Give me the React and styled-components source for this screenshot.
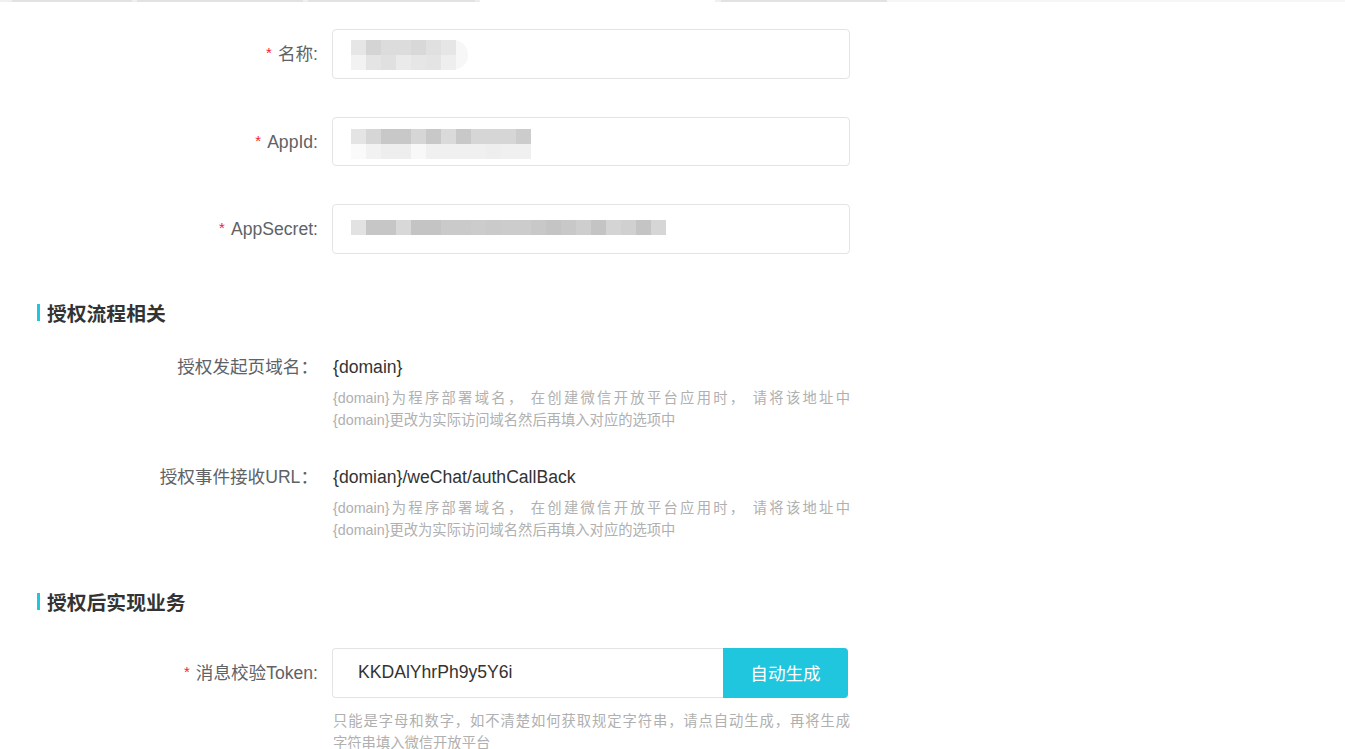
import React from 'react';
import styled, { createGlobalStyle } from 'styled-components';

const GlobalStyle = createGlobalStyle`
  html, body {
    margin: 0;
    padding: 0;
    background: #fff;
  }
  body {
    font-family: "Liberation Sans", "Noto Sans CJK SC", sans-serif;
  }
`;

const Page = styled.div`
  width: 1345px;
  min-height: 749px;
  overflow: hidden;
  background: #fff;
`;

const TabStrip = styled.div`
  display: flex;
  height: 2px;
  background: #f6f6f6;
`;

const TabEdge = styled.div`
  width: ${(p) => p.$w}px;
  height: 2px;
  background: ${(p) => p.$c};
`;

const Form = styled.div`
  padding-top: 27px;
`;

const Item = styled.div`
  display: grid;
  grid-template-columns: 318px ${(p) => p.$w || 518}px;
  column-gap: 14px;
  align-items: ${(p) => (p.$top ? 'start' : 'center')};
  margin-top: ${(p) => p.$mt || 0}px;
  margin-bottom: ${(p) => p.$mb || 0}px;
`;

const Label = styled.div`
  text-align: right;
  font-size: 17.6px;
  line-height: 24px;
  color: #606266;
  white-space: nowrap;
`;

const Star = styled.span`
  color: #f5222d;
  font-size: 15px;
  margin-right: 6px;
  vertical-align: 2px;
`;

const Field = styled.div`
  box-sizing: border-box;
  height: 49.5px;
  border: 1px solid #e4e4e4;
  border-radius: 4px;
  background: #fff;
  display: flex;
  align-items: center;
  padding-left: 18px;
`;

const Mosaic = styled.div`
  display: grid;
  grid-template-columns: repeat(${(p) => p.$cols}, 15px);
  grid-auto-rows: 15px;
  margin-top: ${(p) => p.$dy || 0}px;
  padding-right: ${(p) => (p.$glow ? 12 : 0)}px;
  border-radius: 0 16px 16px 0;
  background: ${(p) => (p.$glow ? '#f7f7f7' : 'transparent')};
`;

const Cell = styled.div`
  background: ${(p) => p.$c};
`;

const SectionTitle = styled.div`
  display: flex;
  align-items: center;
  margin-left: 37px;
  margin-top: ${(p) => p.$mt}px;
  height: 28px;
  font-size: 19.8px;
  font-weight: bold;
  color: #333;

  &::before {
    content: '';
    width: 3px;
    height: 17px;
    margin-right: 7px;
    background: #1fc6de;
  }
`;

const Content = styled.div`
  display: flex;
  flex-direction: column;
`;

const Value = styled.div`
  font-size: 17.6px;
  line-height: 24px;
  color: #333;
  padding-left: 1px;
`;

const Help = styled.div`
  margin-top: ${(p) => p.$mt || 8}px;
  font-size: 14.3px;
  line-height: 22px;
  color: #b0b0b0;
  padding-left: 1px;
`;

const HelpLine = styled.div`
  text-align: ${(p) => (p.$justify ? 'justify' : 'left')};
  text-align-last: ${(p) => (p.$justify ? 'justify' : 'auto')};
  white-space: ${(p) => (p.$justify ? 'normal' : 'nowrap')};
`;

const TokenGroup = styled.div`
  display: flex;
  height: 49.5px;
`;

const TokenInput = styled.input`
  box-sizing: border-box;
  flex: 1;
  min-width: 0;
  height: 100%;
  border: 1px solid #e4e4e4;
  border-right: none;
  border-radius: 4px 0 0 4px;
  padding: 0 0 0 25px;
  font-family: "Liberation Sans", "Noto Sans CJK SC", sans-serif;
  font-size: 17.6px;
  color: #333;
  outline: none;
  background: #fff;
`;

const GenButton = styled.button`
  width: 125px;
  height: 100%;
  border: none;
  border-radius: 0 4px 4px 0;
  background: #1fc6de;
  color: #fff;
  font-family: "Liberation Sans", "Noto Sans CJK SC", sans-serif;
  font-size: 17.6px;
  cursor: pointer;
  padding: 0;
`;

const tabEdges = [
  [12, '#f0f0f0'],
  [120, '#e2e2e2'],
  [5, '#f0f0f0'],
  [166, '#e2e2e2'],
  [5, '#f0f0f0'],
  [167, '#e2e2e2'],
  [5, '#ececec'],
  [235, '#ffffff'],
  [6, '#f0f0f0'],
  [166, '#e2e2e2'],
  [458, '#f6f6f6'],
];

const nameCells = [
  ['#e6e6e6', '#d4d4d4', '#dcdcdc', '#dcdcdc', '#d8d8d8', '#e0e0e0', '#e6e6e6'],
  ['#f2f2f2', '#e4e4e4', '#e0e0e0', '#eaeaea', '#e6e6e6', '#e4e4e4', '#eeeeee'],
];

const appIdCells = [
  ['#e4e4e4', '#d6d6d6', '#c8c8c8', '#c8c8c8', '#d6d6d6', '#c8c8c8', '#dadada', '#c8c8c8', '#d6d6d6', '#d6d6d6', '#d6d6d6', '#cccccc'],
  ['#fafafa', '#f2f2f2', '#eeeeee', '#eeeeee', '#f8f8f8', '#f0f0f0', '#f0f0f0', '#f0f0f0', '#f0f0f0', '#eeeeee', '#f0f0f0', '#f0f0f0'],
];

const secretCells = [
  ['#e2e2e2', '#c6c6c6', '#c6c6c6', '#d8d8d8', '#c4c4c4', '#c4c4c4', '#cacaca', '#cacaca', '#cccccc', '#cacaca', '#cccccc', '#cccccc', '#c8c8c8', '#c4c4c4', '#c8c8c8', '#cecece', '#c4c4c4', '#d4d4d4', '#d0d0d0', '#c4c4c4', '#d6d6d6'],
];

function Blur({ rows, dy, glow }) {
  return (
    <Mosaic $cols={rows[0].length} $dy={dy} $glow={glow}>
      {rows.flat().map((c, i) => (
        <Cell key={i} $c={c} />
      ))}
    </Mosaic>
  );
}

const domainHelp = [
  '{domain}为程序部署域名， 在创建微信开放平台应用时， 请将该地址中',
  '{domain}更改为实际访问域名然后再填入对应的选项中',
];

export default function App() {
  return (
    <Page>
      <GlobalStyle />
      <TabStrip>
        {tabEdges.map(([w, c], i) => (
          <TabEdge key={i} $w={w} $c={c} />
        ))}
      </TabStrip>
      <Form>
        <Item $mb={38}>
          <Label><Star>*</Star>名称:</Label>
          <Field><Blur rows={nameCells} dy={2} glow /></Field>
        </Item>
        <Item $mb={38}>
          <Label><Star>*</Star>AppId:</Label>
          <Field><Blur rows={appIdCells} dy={6} /></Field>
        </Item>
        <Item>
          <Label><Star>*</Star>AppSecret:</Label>
          <Field><Blur rows={secretCells} dy={-3} /></Field>
        </Item>

        <SectionTitle $mt={44.5}>授权流程相关</SectionTitle>

        <Item $top $mt={29}>
          <Label>授权发起页域名：</Label>
          <Content>
            <Value>{'{domain}'}</Value>
            <Help>
              <HelpLine $justify>{domainHelp[0]}</HelpLine>
              <HelpLine>{domainHelp[1]}</HelpLine>
            </Help>
          </Content>
        </Item>

        <Item $top $mt={34}>
          <Label>授权事件接收URL：</Label>
          <Content>
            <Value>{'{domian}/weChat/authCallBack'}</Value>
            <Help>
              <HelpLine $justify>{domainHelp[0]}</HelpLine>
              <HelpLine>{domainHelp[1]}</HelpLine>
            </Help>
          </Content>
        </Item>

        <SectionTitle $mt={46}>授权后实现业务</SectionTitle>

        <Item $mt={33} $w={516}>
          <Label><Star>*</Star>消息校验Token:</Label>
          <TokenGroup>
            <TokenInput readOnly value="KKDAlYhrPh9y5Y6i" />
            <GenButton>自动生成</GenButton>
          </TokenGroup>
        </Item>
        <Item $top $w={518}>
          <div />
          <Help $mt={12.5}>
            <HelpLine $justify>只能是字母和数字，如不清楚如何获取规定字符串，请点自动生成，再将生成</HelpLine>
            <HelpLine>字符串填入微信开放平台</HelpLine>
          </Help>
        </Item>
      </Form>
    </Page>
  );
}
